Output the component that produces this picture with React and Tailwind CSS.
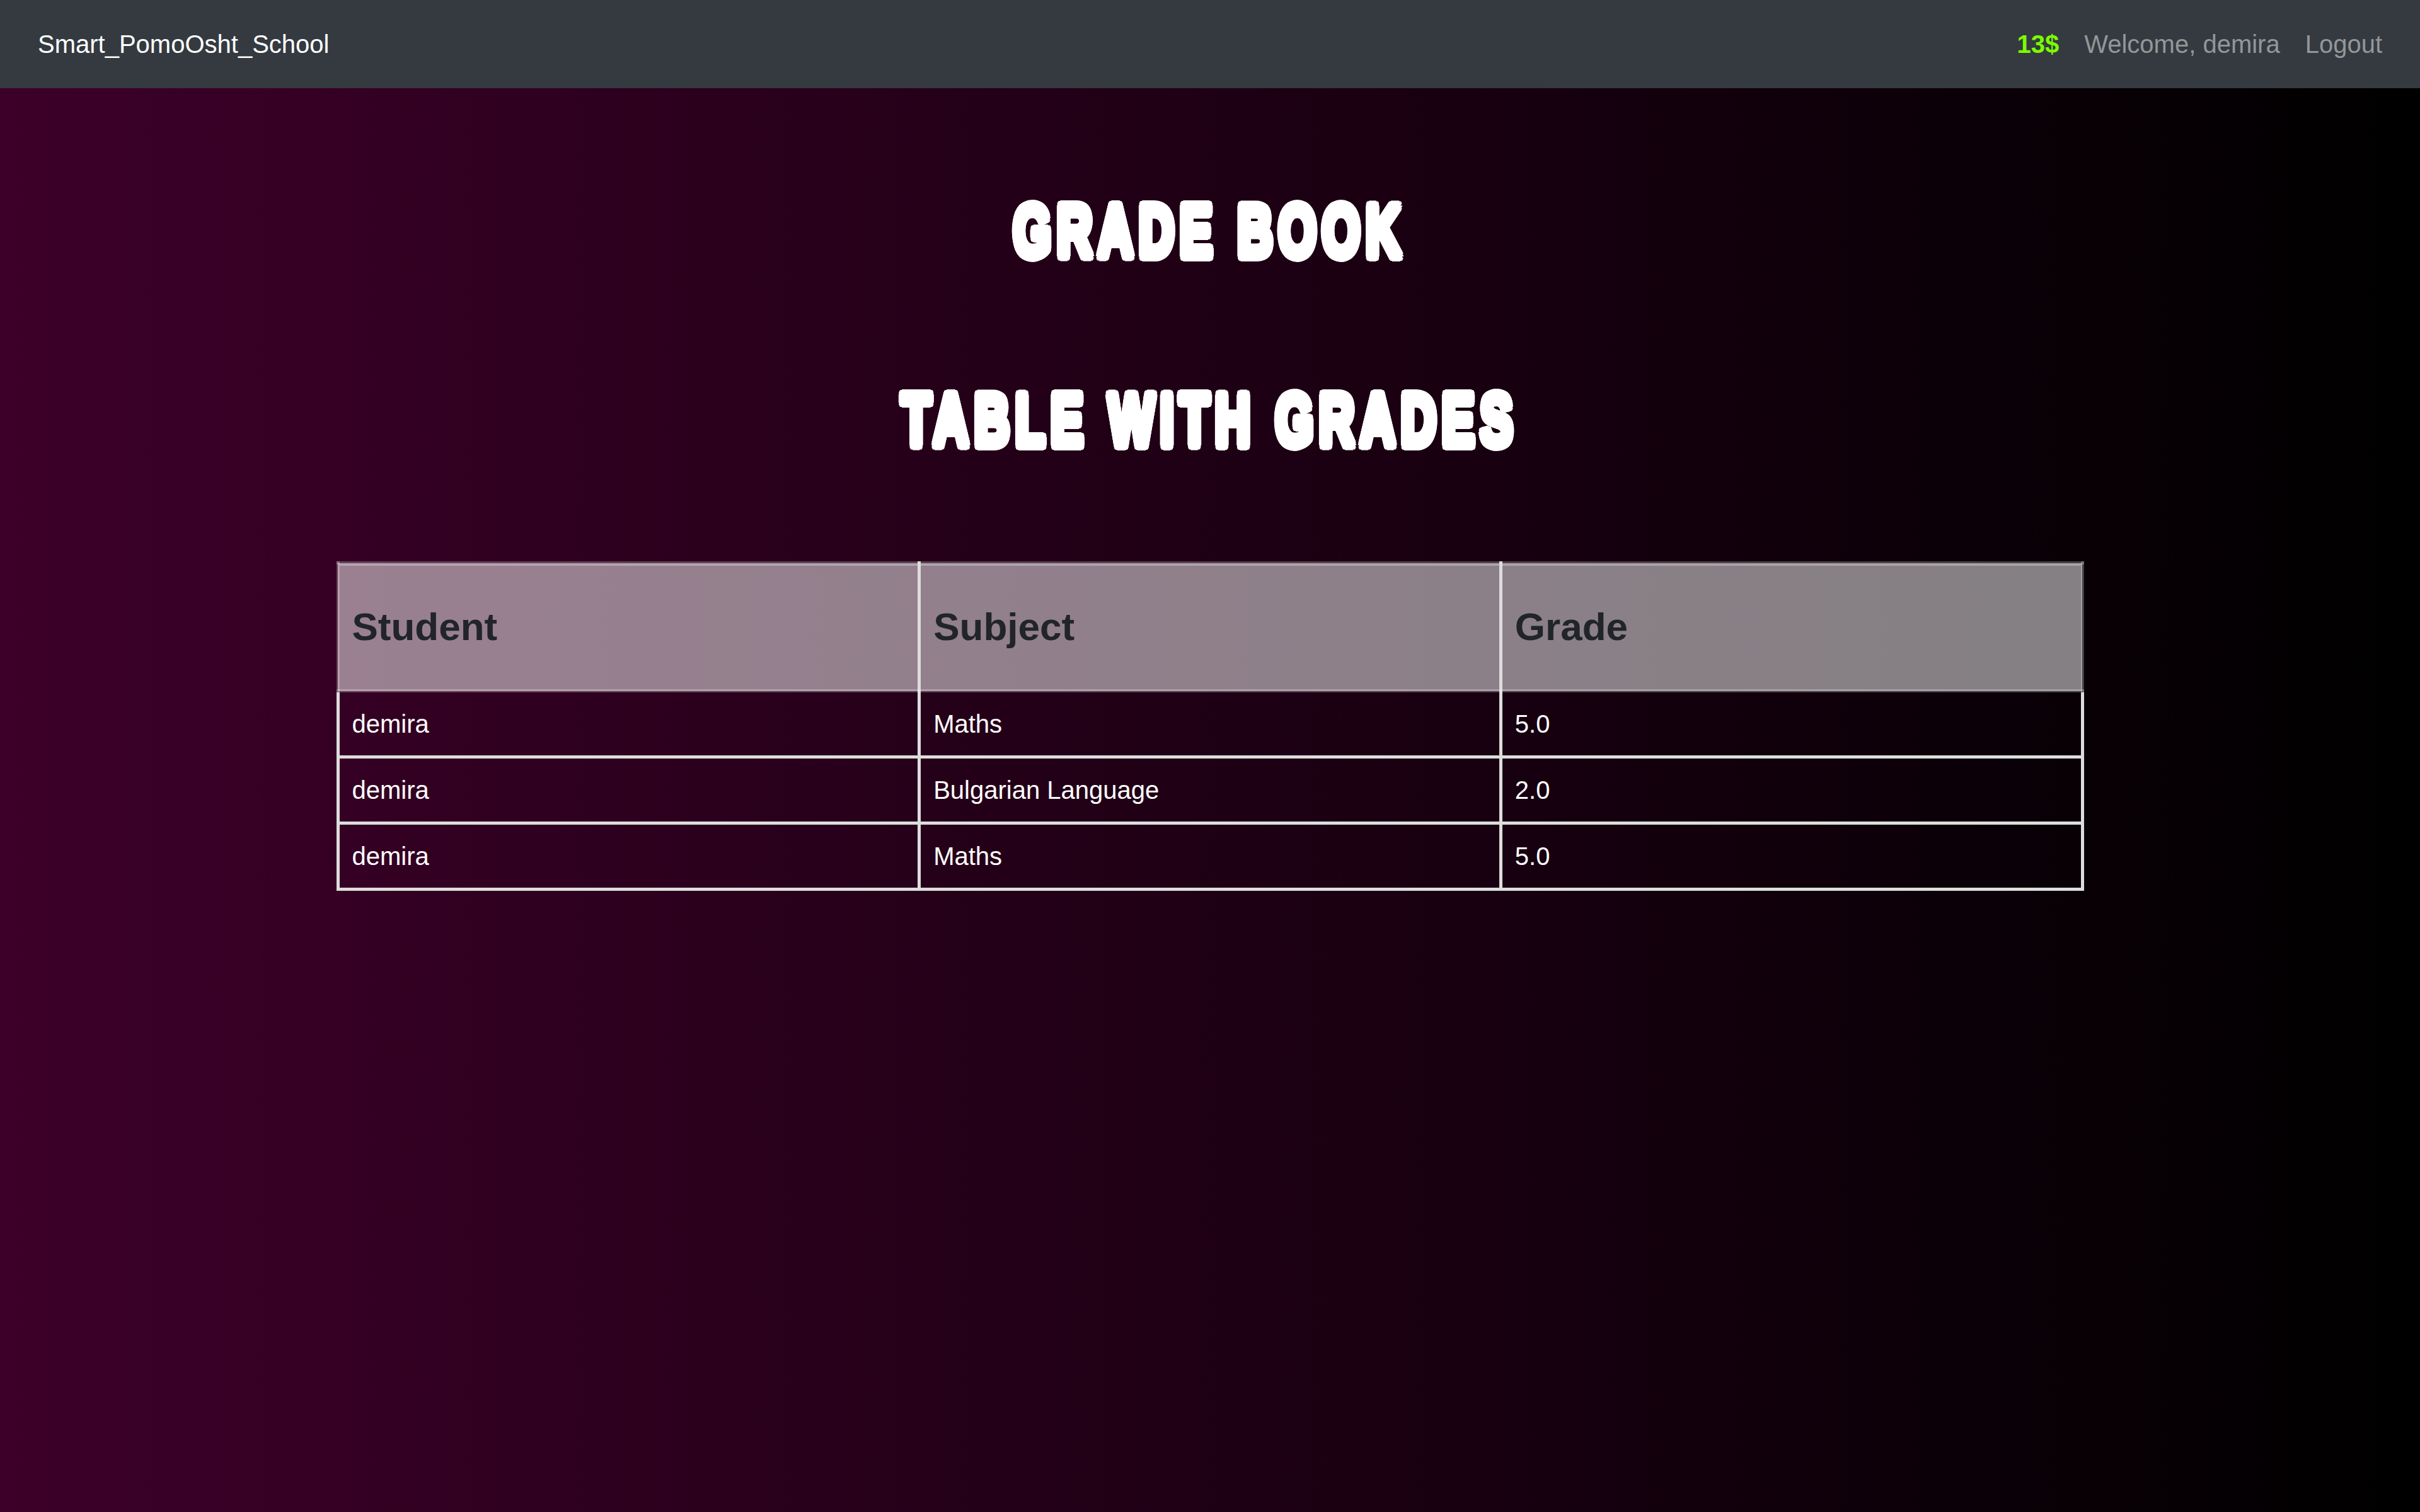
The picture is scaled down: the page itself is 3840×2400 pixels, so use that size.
import React from 'react'

const grades = [
  { student: 'demira', subject: 'Maths', grade: '5.0' },
  { student: 'demira', subject: 'Bulgarian Language', grade: '2.0' },
  { student: 'demira', subject: 'Maths', grade: '5.0' },
]

// stands in for Impact: heavy bold, squeezed sideways and thickened with shadows
const headingClass =
  "font-['Liberation_Sans',Arial,sans-serif] font-bold text-[117px] leading-none text-white text-center uppercase tracking-[14px] scale-x-[0.66] [text-shadow:8px_0_0_#fff,-8px_0_0_#fff,0_8px_0_#fff,0_-8px_0_#fff,6px_6px_0_#fff,-6px_6px_0_#fff,6px_-6px_0_#fff,-6px_-6px_0_#fff,4px_7px_0_#fff,-4px_7px_0_#fff,4px_-7px_0_#fff,-4px_-7px_0_#fff,7px_4px_0_#fff,-7px_4px_0_#fff,7px_-4px_0_#fff,-7px_-4px_0_#fff]"

const App = () => {
  return (
    <div className="min-h-screen flex flex-col font-['Liberation_Sans',Arial,sans-serif]">
      {/* Navbar */}
      <nav className="h-[140px] shrink-0 bg-[#343a40] flex items-center justify-between px-[60px] text-[40px] leading-[60px]">
        <span className="text-white">Smart_PomoOsht_School</span>
        <div className="flex items-center gap-[40px]">
          <span className="font-bold text-[#7cfc00]">13$</span>
          <span className="text-[#939699]">Welcome, demira</span>
          <span className="text-[#939699]">Logout</span>
        </div>
      </nav>

      {/* Content */}
      <main className="flex-1 bg-[linear-gradient(to_right,#3d0029,#000000)] flex flex-col items-center pb-[200px]">
        <h1 className={`${headingClass} mt-[168px]`}>Grade Book</h1>
        <h2 className={`${headingClass} mt-[183px]`}>Table with Grades</h2>

        <table className="mt-[166px] w-[2773px] border-collapse text-[40px]">
          <thead>
            <tr className="bg-white/50">
              {['Student', 'Subject', 'Grade'].map((h, i) => (
                <th
                  key={h}
                  className={`h-[203px] px-[20px] text-left align-middle font-bold text-[62px] leading-[1.2] text-[#212529] border-[5px] border-y-white/25 shadow-[inset_0_2px_0_rgba(255,255,255,0.3)] ${
                    i === 0 ? 'border-l-white/25' : 'border-l-[#dddddd]'
                  } ${i === 2 ? 'border-r-white/25' : 'border-r-[#dddddd]'}`}
                >
                  {h}
                </th>
              ))}
            </tr>
          </thead>
          <tbody>
            {grades.map((g, idx) => (
              <tr key={idx} className="text-white">
                <td className="w-1/3 h-[105px] px-[20px] border-[5px] border-[#dddddd] leading-[1.5]">{g.student}</td>
                <td className="w-1/3 h-[105px] px-[20px] border-[5px] border-[#dddddd] leading-[1.5]">{g.subject}</td>
                <td className="w-1/3 h-[105px] px-[20px] border-[5px] border-[#dddddd] leading-[1.5]">{g.grade}</td>
              </tr>
            ))}
          </tbody>
        </table>
      </main>
    </div>
  )
}

export default App
